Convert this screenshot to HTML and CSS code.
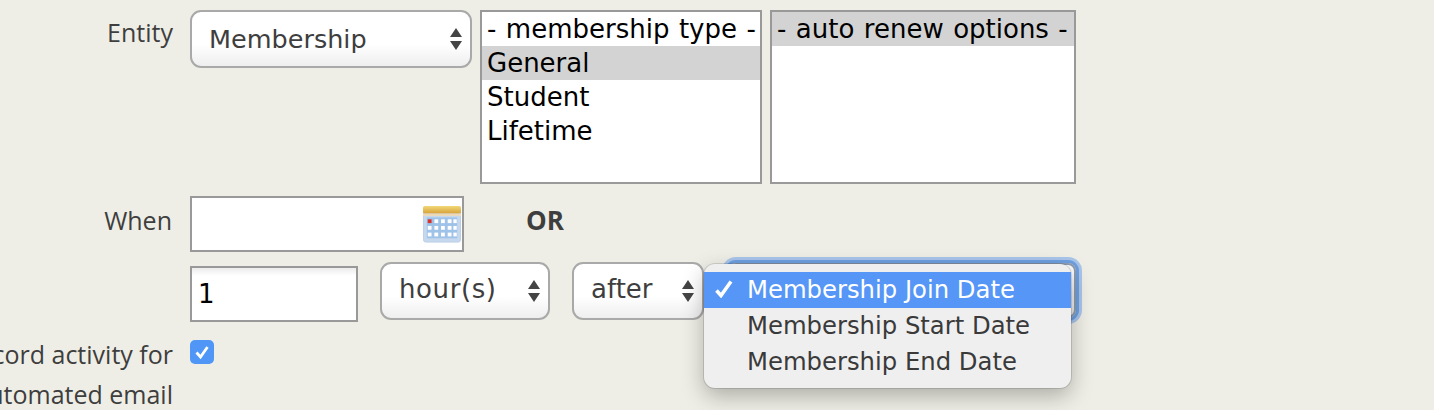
FILE: index.html
```html
<!DOCTYPE html>
<html lang="en">
<head>
<meta charset="utf-8">
<title>Schedule reminder</title>
<link rel="stylesheet" href="styles.css">
</head>
<body>
<form class="form">
  <div class="label label-entity">Entity</div>
  <div class="row row-entity">
    <div class="select select-entity"><span>Membership</span>
      <svg class="arrows" viewBox="0 0 12 22"><path d="M6 0l6 9H0zM6 22l6-9H0z"/></svg>
    </div>
    <div class="listbox list-type">
      <div class="option">- membership type -</div>
      <div class="option selected">General</div>
      <div class="option">Student</div>
      <div class="option">Lifetime</div>
    </div>
    <div class="listbox list-renew">
      <div class="option selected">- auto renew options -</div>
    </div>
  </div>

  <div class="label label-when">When</div>
  <div class="row row-when">
    <div class="date-field">
      <input class="input input-date" type="text" aria-label="When">
      <svg class="calendar" viewBox="0 0 40 40">
        <defs>
          <linearGradient id="cal-top" x1="0" y1="0" x2="0" y2="1"><stop offset="0" stop-color="#f0d878"/><stop offset="1" stop-color="#d9a238"/></linearGradient>
        </defs>
        <rect x="0.5" y="0.5" width="39" height="37.5" rx="2.5" fill="#c6d8ee" stroke="#bccde6"/>
        <rect x="0" y="0" width="40" height="8" rx="2" fill="url(#cal-top)"/>
        <rect x="0" y="8" width="40" height="2.5" fill="#ecd9b8"/>
        <rect x="4" y="12" width="32" height="22" fill="#9fc2e8"/>
        <g fill="#fff">
          <rect x="12" y="14" width="4" height="4"/><rect x="19" y="14" width="4" height="4"/><rect x="26" y="14" width="4" height="4"/><rect x="32" y="14" width="3.5" height="4"/>
          <rect x="5" y="21" width="4" height="4"/><rect x="12" y="21" width="4" height="4"/><rect x="19" y="21" width="4" height="4"/><rect x="26" y="21" width="4" height="4"/><rect x="32" y="21" width="3.5" height="4"/>
          <rect x="5" y="28" width="4" height="4"/><rect x="12" y="28" width="4" height="4"/><rect x="19" y="28" width="4" height="4"/><rect x="26" y="28" width="4" height="4"/><rect x="32" y="28" width="3.5" height="4"/>
        </g>
        <rect x="5" y="14" width="4" height="4" fill="#d8322a"/>
      </svg>
    </div>
    <strong class="or">OR</strong>
  </div>

  <div class="label label-empty"></div>
  <div class="row row-offset">
    <input class="input input-num" type="text" value="1" aria-label="Offset">
    <div class="select select-unit"><span>hour(s)</span>
      <svg class="arrows" viewBox="0 0 12 22"><path d="M6 0l6 9H0zM6 22l6-9H0z"/></svg>
    </div>
    <div class="select select-after"><span>after</span>
      <svg class="arrows" viewBox="0 0 12 22"><path d="M6 0l6 9H0zM6 22l6-9H0z"/></svg>
    </div>
    <div class="focus-select">
      <ul class="menu">
        <li class="menu-item active"><svg class="tick" viewBox="0 0 18 18"><path d="M1.500 10.500L6 15.500 16 1.500" fill="none" stroke="#fff" stroke-width="3.600"/></svg>Membership Join Date</li>
        <li class="menu-item">Membership Start Date</li>
        <li class="menu-item">Membership End Date</li>
      </ul>
    </div>
  </div>

  <div class="label label-record">Record activity for<br>automated email</div>
  <div class="row row-check">
    <div class="checkbox"><svg viewBox="0 0 24 24"><path d="M6.500 12.500l4 4.500 7-10" fill="none" stroke="#fff" stroke-width="2.800"/></svg></div>
  </div>
</form>
</body>
</html>
```

FILE: styles.css
```css
html, body {
  margin: 0;
  height: 410px;
  overflow: hidden;
  background: #eeeee6;
}

.form {
  display: grid;
  grid-template-columns: 233px 1fr;
  column-gap: 17px;
  margin: 0 0 0 -60px;
  padding-top: 10px;
  font-family: "DejaVu Sans", Verdana, sans-serif;
  color: #3e3e3e;
}

.label {
  font-size: 25px;
  line-height: 34px;
  text-align: right;
  color: #3e3e3e;
  white-space: nowrap;
  font-family: "Open Sans", "DejaVu Sans", sans-serif;
}

.label-entity { padding-top: 5px; }
.label-when { padding: 7px 1px 0 0; }
.label-record { margin-top: -6px; line-height: 40px; }

.row {
  display: flex;
  align-items: flex-start;
}

.row-entity { gap: 8px; height: 186px; }
.row-when { height: 70px; }
.row-offset { height: 74px; }

.select {
  position: relative;
  display: flex;
  align-items: center;
  box-sizing: border-box;
  border: 2px solid #a9a9a9;
  border-radius: 11px;
  background: linear-gradient(#fff 0, #fff 60%, #eeeeee 100%);
  padding-left: 17px;
  font-size: 26px;
  color: #3e3e3e;
  height: 58px;
}

.select-entity { width: 282px; font-size: 25.500px; }
.select-unit {
  width: 170px;
  margin: -4px 0 0 22px;
  padding-bottom: 4px;
  letter-spacing: 0.600px;
}
.select-after { width: 132px; margin: -4px 0 0 22px; padding-bottom: 4px; }

.arrows {
  position: absolute;
  right: 8px;
  top: 16px;
  width: 12px;
  height: 22px;
  fill: #444;
}

.listbox {
  box-sizing: border-box;
  height: 174px;
  border: 2px solid #999;
  background: #fff;
  font-size: 26px;
  word-spacing: 1.200px;
  color: #000;
}

.list-type { width: 282px; }
.list-renew { width: 306px; }

.option {
  height: 34px;
  line-height: 34px;
  padding-left: 5px;
  white-space: nowrap;
}

.option.selected { background: #d3d3d3; }

.date-field { position: relative; }

.input {
  display: block;
  box-sizing: border-box;
  height: 56px;
  border: 2px solid #999;
  border-radius: 0;
  background: #fff;
  padding: 0 6px;
  margin: 0;
  font: 26px "DejaVu Sans", Verdana, sans-serif;
  color: #000;
  outline: none;
}

.input-date { width: 274px; }
.input-num {
  width: 168px;
  background: linear-gradient(#ececec 0, #fff 8px);
}

.calendar {
  position: absolute;
  right: 2px;
  top: 10px;
  width: 40px;
  height: 38px;
}

.or {
  margin: 7px 0 0 62px;
  font-size: 26px;
  line-height: 34px;
  font-family: "Open Sans", "DejaVu Sans", sans-serif;
  color: #3e3e3e;
}

.focus-select {
  position: relative;
  box-sizing: border-box;
  width: 348px;
  height: 55px;
  margin: -3px 0 0 24px;
  border: 2px solid #8f9db1;
  border-radius: 8px;
  background: linear-gradient(#fff, #e8e8e8);
  box-shadow: 0 0 0 3px #6d9fe0, 0 0 0 6px #a9c5ea;
}

.menu {
  position: absolute;
  left: -26px;
  top: -1px;
  width: 367px;
  height: 124px;
  box-sizing: border-box;
  margin: 0;
  padding: 8px 0;
  list-style: none;
  background: #efefef;
  border-radius: 11px;
  box-shadow: 0 0 0 1px rgba(0, 0, 0, 0.12), 0 8px 22px rgba(0, 0, 0, 0.28);
  font-size: 24.300px;
  color: #3a3a3a;
}

.menu-item {
  position: relative;
  height: 36px;
  line-height: 35px;
  padding-left: 43px;
  white-space: nowrap;
}

.menu-item.active {
  background: #5596f6;
  color: #fff;
}

.tick {
  position: absolute;
  left: 11px;
  top: 8px;
  width: 18px;
  height: 18px;
}

.checkbox {
  box-sizing: border-box;
  width: 24px;
  height: 24px;
  border-radius: 5px;
  background: #4f96f6;
}

.checkbox svg {
  display: block;
  width: 24px;
  height: 24px;
}
```
